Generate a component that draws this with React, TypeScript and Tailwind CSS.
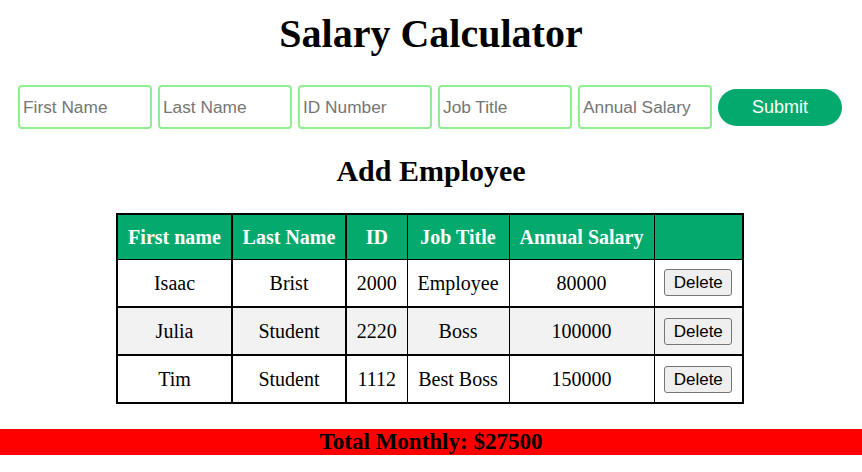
const employees = [
  { first: "Isaac", last: "Brist", id: "2000", title: "Employee", salary: "80000" },
  { first: "Julia", last: "Student", id: "2220", title: "Boss", salary: "100000" },
  { first: "Tim", last: "Student", id: "1112", title: "Best Boss", salary: "150000" },
];

const fields = ["First Name", "Last Name", "ID Number", "Job Title", "Annual Salary"];

export default function App() {
  return (
    <div className="min-h-screen bg-white text-black font-['Liberation_Serif',serif]">
      <h1 className="pt-[11px] text-center text-[40px] leading-[46px] font-bold">Salary Calculator</h1>

      {/* form */}
      <div className="mt-[28px] flex items-center gap-[6px] pl-[18px]">
        {fields.map((f) => (
          <input
            key={f}
            placeholder={f}
            className="h-[44px] w-[134px] rounded-[4px] border-2 border-[#90ee90] pl-[3px] font-['Liberation_Sans',sans-serif] text-[17.3px] outline-none placeholder:text-[#757575]"
          />
        ))}
        <button className="h-[37px] w-[124px] rounded-full bg-[#04aa6d] font-['Liberation_Sans',sans-serif] text-[18px] text-white">
          Submit
        </button>
      </div>

      <h2 className="mt-[25px] text-center text-[30px] leading-[34px] font-bold">Add Employee</h2>

      <table className="ml-[116px] mt-[25px] w-[626px] table-fixed border-collapse border-2 border-black text-center text-[20px]">
        <colgroup>
          <col className="w-[115px]" />
          <col className="w-[114px]" />
          <col className="w-[61px]" />
          <col className="w-[102px]" />
          <col className="w-[145px]" />
          <col className="w-[89px]" />
        </colgroup>
        <thead>
          <tr className="h-[45px] bg-[#04aa6d] text-white">
            <th className="border border-r-2 border-black">First name</th>
            <th className="border border-r-2 border-black">Last Name</th>
            <th className="border border-black">ID</th>
            <th className="border border-black">Job Title</th>
            <th className="border border-black">Annual Salary</th>
            <th className="border border-black"></th>
          </tr>
        </thead>
        <tbody>
          {employees.map((e, i) => (
            <tr key={e.id} className={i === 1 ? "h-[48px] bg-[#f2f2f2]" : "h-[48px] bg-white"}>
              <td className="border border-r-2 border-b-2 border-black">{e.first}</td>
              <td className="border border-r-2 border-b-2 border-black">{e.last}</td>
              <td className="border border-b-2 border-black">{e.id}</td>
              <td className="border border-b-2 border-black">{e.title}</td>
              <td className="border border-b-2 border-black">{e.salary}</td>
              <td className="border border-b-2 border-black">
                <button className="mb-[3px] h-[27px] w-[68px] rounded-[3px] border border-[#767676] bg-[#efefef] font-['Liberation_Sans',sans-serif] text-[17px] leading-none">
                  Delete
                </button>
              </td>
            </tr>
          ))}
        </tbody>
      </table>

      <div className="mt-[25px] h-[26px] bg-[#ff0000] text-center text-[23px] leading-[26px] font-bold">
        Total Monthly: $27500
      </div>
    </div>
  );
}
